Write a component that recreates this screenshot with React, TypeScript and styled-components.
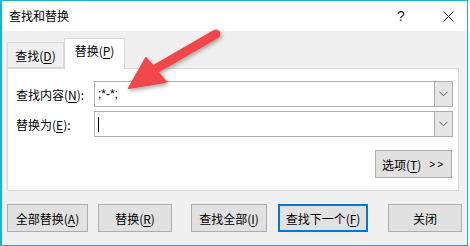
import styled, { createGlobalStyle } from "styled-components";

const GlobalStyle = createGlobalStyle`
  html, body {
    margin: 0;
    padding: 0;
    background: #ffffff;
  }
  body {
    font-family: "Noto Sans CJK SC", "Liberation Sans", sans-serif;
    font-size: 12px;
    color: #000000;
  }
`;

const Window = styled.div`
  position: relative;
  width: 468px;
  height: 246px;
  box-sizing: border-box;
  border: 1px solid #1fb3c9;
  border-left-width: 2px;
  background: #f0f0f0;
  display: flex;
  flex-direction: column;
`;

const TitleBar = styled.div`
  height: 30px;
  background: #ffffff;
  display: flex;
  align-items: center;
  padding-left: 7px;
`;

const Title = styled.span`
  flex: 1;
  font-size: 12px;
  line-height: 1;
`;

const HelpButton = styled.span`
  width: 20px;
  text-align: center;
  font-family: "Liberation Sans", sans-serif;
  font-size: 14px;
  color: #222;
`;

const CloseButton = styled.span`
  width: 26px;
  margin-left: 24px;
  margin-right: 6px;
  display: flex;
  justify-content: center;
  align-items: center;
`;

const Body = styled.div`
  flex: 1;
  padding: 7px 0 0 5px;
  display: flex;
  flex-direction: column;
`;

const TabStrip = styled.div`
  display: flex;
  align-items: flex-end;
  height: 30px;
  position: relative;
  z-index: 1;
`;

const Tab = styled.div<{ $active?: boolean }>`
  box-sizing: border-box;
  height: ${(p) => (p.$active ? 31 : 26)}px;
  width: ${(p) => (p.$active ? 61 : 57)}px;
  margin-bottom: ${(p) => (p.$active ? -1 : 0)}px;
  padding-top: ${(p) => (p.$active ? 4 : 5)}px;
  text-align: center;
  background: ${(p) => (p.$active ? "#ffffff" : "#f0f0f0")};
  border: 1px solid #d9d9d9;
  border-bottom: ${(p) => (p.$active ? "none" : "1px solid #d9d9d9")};
  font-size: 12px;
  line-height: 16px;
`;

const Panel = styled.div`
  width: 452px;
  height: 123px;
  box-sizing: border-box;
  background: #ffffff;
  border: 1px solid #d9d9d9;
  padding: 12px 5px 0 8px;
  display: flex;
  flex-direction: column;
`;

const FieldRow = styled.div<{ $top: number }>`
  display: flex;
  align-items: center;
  margin-top: ${(p) => p.$top}px;
`;

const Label = styled.div`
  width: 78px;
  font-size: 12px;
`;

const Combo = styled.div`
  box-sizing: border-box;
  width: 359px;
  height: 26px;
  border: 1px solid #adadad;
  display: flex;
  background: #ffffff;
`;

const ComboText = styled.div`
  flex: 1;
  padding-left: 3px;
  display: flex;
  align-items: center;
  font-family: "Liberation Sans", sans-serif;
  font-size: 12px;
`;

const Caret = styled.span`
  display: inline-block;
  width: 1px;
  height: 15px;
  background: #000;
`;

const DropButton = styled.div`
  width: 17px;
  background: #e5e5e5;
  border-left: 1px solid #adadad;
  display: flex;
  align-items: center;
  justify-content: center;
`;

const OptionsRow = styled.div`
  display: flex;
  justify-content: flex-end;
  margin-top: 13px;
  padding-right: 1px;
`;

const Button = styled.div<{ $width: number; $gap?: number; $default?: boolean }>`
  box-sizing: border-box;
  width: ${(p) => p.$width}px;
  height: 28px;
  margin-left: ${(p) => p.$gap ?? 0}px;
  background: #e1e1e1;
  border: ${(p) => (p.$default ? "2px solid #0078d7" : "1px solid #adadad")};
  display: flex;
  align-items: center;
  justify-content: center;
  font-size: 12px;
`;

const Arrows = styled.span`
  font-family: "Liberation Sans", sans-serif;
  font-size: 10px;
  margin-left: 8px;
  letter-spacing: 2px;
`;

const ButtonRow = styled.div`
  display: flex;
  margin-top: 13px;
`;

const Key = styled.span`
  text-decoration: underline;
  text-underline-offset: 2px;
`;

const Overlay = styled.svg`
  position: absolute;
  left: 0;
  top: 0;
  pointer-events: none;
`;

function Chevron() {
  return (
    <svg width="9" height="6" viewBox="0 0 9 6">
      <path d="M0.5 0.8 L4.5 4.8 L8.5 0.8" fill="none" stroke="#555" strokeWidth="1" />
    </svg>
  );
}

function CloseIcon() {
  return (
    <svg width="11" height="11" viewBox="0 0 11 11">
      <path d="M0.5 0.5 L10.5 10.5 M10.5 0.5 L0.5 10.5" fill="none" stroke="#222" strokeWidth="1" />
    </svg>
  );
}

function RedArrow() {
  return (
    <Overlay width="468" height="246" viewBox="0 0 468 246">
      <defs>
        <filter id="sh" x="-20%" y="-20%" width="140%" height="140%">
          <feDropShadow dx="1" dy="2" stdDeviation="2" floodColor="#000" floodOpacity="0.35" />
        </filter>
      </defs>
      <g filter="url(#sh)">
        <line x1="214" y1="33" x2="150" y2="70" stroke="#f0464b" strokeWidth="9" strokeLinecap="round" />
        <polygon points="127,87 144,57 164,81" fill="#f0464b" stroke="#f0464b" strokeWidth="2" strokeLinejoin="round" />
      </g>
    </Overlay>
  );
}

export default function App() {
  return (
    <>
      <GlobalStyle />
      <Window>
        <TitleBar>
          <Title>查找和替换</Title>
          <HelpButton>?</HelpButton>
          <CloseButton>
            <CloseIcon />
          </CloseButton>
        </TitleBar>
        <Body>
          <TabStrip>
            <Tab>
              查找(<Key>D</Key>)
            </Tab>
            <Tab $active>
              替换(<Key>P</Key>)
            </Tab>
          </TabStrip>
          <Panel>
            <FieldRow $top={0}>
              <Label>
                查找内容(<Key>N</Key>):
              </Label>
              <Combo>
                <ComboText>;*-*;</ComboText>
                <DropButton>
                  <Chevron />
                </DropButton>
              </Combo>
            </FieldRow>
            <FieldRow $top={4}>
              <Label>
                替换为(<Key>E</Key>):
              </Label>
              <Combo>
                <ComboText>
                  <Caret />
                </ComboText>
                <DropButton>
                  <Chevron />
                </DropButton>
              </Combo>
            </FieldRow>
            <OptionsRow>
              <Button $width={77}>
                选项(<Key>T</Key>)<Arrows>&gt;&gt;</Arrows>
              </Button>
            </OptionsRow>
          </Panel>
          <ButtonRow>
            <Button $width={81}>
              全部替换(<Key>A</Key>)
            </Button>
            <Button $width={74} $gap={10}>
              替换(<Key>R</Key>)
            </Button>
            <Button $width={76} $gap={19}>
              查找全部(<Key>I</Key>)
            </Button>
            <Button $width={90} $gap={11} $default>
              查找下一个(<Key>F</Key>)
            </Button>
            <Button $width={74} $gap={20}>
              关闭
            </Button>
          </ButtonRow>
        </Body>
        <RedArrow />
      </Window>
    </>
  );
}
